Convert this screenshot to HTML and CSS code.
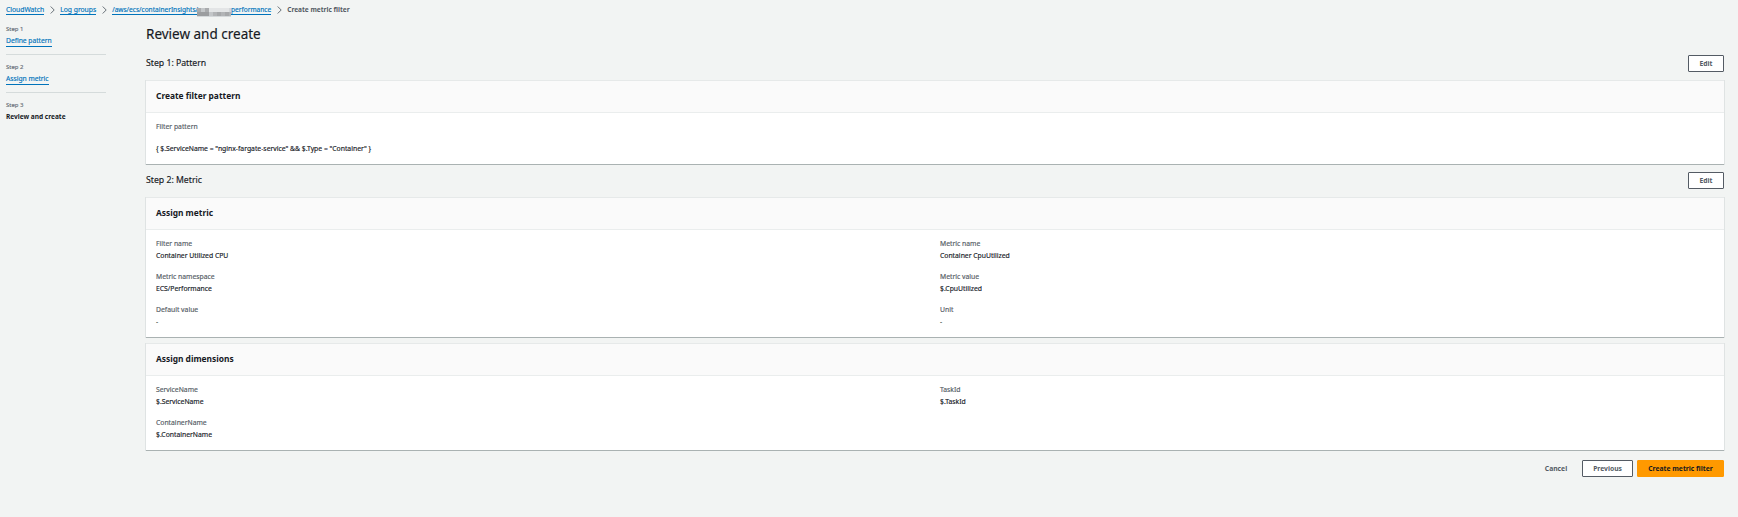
FILE: index.html
```
<!DOCTYPE html>
<html lang="en">
<head>
<meta charset="utf-8">
<title>Create metric filter</title>
<link rel="stylesheet" href="styles.css">
</head>
<body>
<nav class="breadcrumbs">
  <a class="link">CloudWatch</a>
  <svg class="chevron" viewBox="0 0 5 8"><path d="M.7.5 4.2 4 .7 7.5"/></svg>
  <a class="link">Log groups</a>
  <svg class="chevron" viewBox="0 0 5 8"><path d="M.7.5 4.2 4 .7 7.5"/></svg>
  <a class="link path"><span>/aws/ecs/containerInsights/</span><svg class="redacted" viewBox="0 0 34 9"><path fill="#d4d8da" d="M0 0h34v9H0z"/><path fill="#a9abad" d="M0 0h4v4H0zM8 0h4v4H8z"/><path fill="#9b9d9f" d="M0 4h12v4H0z"/><path fill="#c3c6c8" d="M4 0h4v4H4zM12 4h4v4h-4z"/><path fill="#e3e5e6" d="M12 0h20v4H12z"/><path fill="#b2b4b6" d="M16 4h18v4H16z"/><path fill="#a6a8aa" d="M20 4h4v4h-4zM28 4h4v4h-4z"/></svg><span>performance</span></a>
  <svg class="chevron" viewBox="0 0 5 8"><path d="M.7.5 4.2 4 .7 7.5"/></svg>
  <span class="current">Create metric filter</span>
</nav>
<div class="layout">
  <aside class="steps">
    <div class="step"><div class="step-no">Step 1</div><a class="link">Define pattern</a></div>
    <div class="step"><div class="step-no">Step 2</div><a class="link">Assign metric</a></div>
    <div class="step"><div class="step-no">Step 3</div><b class="active">Review and create</b></div>
  </aside>
  <main class="main">
    <h1 class="title">Review and create</h1>
    <div class="section-head"><h2 class="section-title">Step 1: Pattern</h2><button class="btn">Edit</button></div>
    <section class="card">
      <h3 class="card-head">Create filter pattern</h3>
      <div class="card-body">
        <div class="label">Filter pattern</div>
        <div class="value expression">{ $.ServiceName = "nginx-fargate-service" &amp;&amp; $.Type = "Container" }</div>
      </div>
    </section>
    <div class="section-head second"><h2 class="section-title">Step 2: Metric</h2><button class="btn">Edit</button></div>
    <section class="card">
      <h3 class="card-head">Assign metric</h3>
      <div class="card-body grid">
        <div><div class="label">Filter name</div><div class="value">Container Utilized CPU</div></div>
        <div><div class="label">Metric name</div><div class="value">Container CpuUtilized</div></div>
        <div><div class="label">Metric namespace</div><div class="value">ECS/Performance</div></div>
        <div><div class="label">Metric value</div><div class="value">$.CpuUtilized</div></div>
        <div><div class="label">Default value</div><div class="value">-</div></div>
        <div><div class="label">Unit</div><div class="value">-</div></div>
      </div>
    </section>
    <section class="card last">
      <h3 class="card-head">Assign dimensions</h3>
      <div class="card-body grid">
        <div><div class="label">ServiceName</div><div class="value">$.ServiceName</div></div>
        <div><div class="label">TaskId</div><div class="value">$.TaskId</div></div>
        <div><div class="label">ContainerName</div><div class="value">$.ContainerName</div></div>
      </div>
    </section>
    <div class="actions">
      <button class="btn plain">Cancel</button>
      <button class="btn">Previous</button>
      <button class="btn primary">Create metric filter</button>
    </div>
  </main>
</div>
</body>
</html>
```
FILE: styles.css
```
* { box-sizing: border-box; }
body {
  margin: 0;
  background: #f2f4f3;
  color: #16191f;
  font: 6.8px/12px "Noto Sans", sans-serif;
  -webkit-text-stroke: .15px;
}
h1, h2, h3 { margin: 0; }

.breadcrumbs {
  display: flex;
  align-items: center;
  height: 15px;
  margin: 2px 0;
  padding-left: 6px;
  line-height: 11px;
}
.breadcrumbs .link { font-size: 6.75px; height: 11px; }
.breadcrumbs .path { font-size: 6.57px; display: flex; }
.link { color: #0073bb; border-bottom: 1px solid #0073bb; white-space: nowrap; }
.chevron {
  width: 5px;
  height: 8px;
  margin: 0 5px 0 6px;
  fill: none;
  stroke: #687078;
}
.redacted { width: 34px; height: 9px; margin: 4px 0 -3px 0; }
.path span:first-child { margin-right: -1px; }
.current { color: #545b64; font-size: 6.55px; font-weight: 700; -webkit-text-stroke: 0; }

.layout { display: flex; }
.steps { width: 100px; margin: 4px 40px 0 6px; }
.step { height: 38px; }
.step + .step { border-top: 1px solid #d5dbdb; padding-top: 6px; }
.step:first-child { height: 31px; }
.step-no { font-size: 5.95px; color: #687078; line-height: 12px; }
.step .link { display: inline-block; font-size: 6.7px; line-height: 10px; height: 11px; }
.active { display: block; font-size: 6.56px; line-height: 12px; -webkit-text-stroke: 0; }

.main { width: 1578px; }
.title { font-size: 13.5px; line-height: 20px; font-weight: 400; padding-top: 5px; }
.section-head { display: flex; justify-content: space-between; align-items: center; height: 17px; margin: 11px 0 8px; }
.section-head.second { margin: 7px 0 8px; }
.section-title { font-size: 8.7px; font-weight: 400; line-height: 12px; padding-bottom: 2px; }

.card {
  background: #fff;
  border-top: 1px solid #e6e9e9;
  border-bottom: 1px solid #aab2b2;
  box-shadow: 1px 0 #dfe3e3, -1px 0 #dfe3e3;
}
.card.last { margin-top: 5px; }
.card-head {
  height: 32px;
  padding-left: 10px;
  background: #fafafa;
  border-bottom: 1px solid #eaeded;
  font-size: 8.4px;
  line-height: 30px;
  -webkit-text-stroke: 0;
}
.card-body { padding: 8px 10px 9px; }
.grid { display: grid; grid-template-columns: 1fr 1fr; gap: 9px 10px; }
.label { color: #545b64; }
.expression { margin-top: 10px; }

.actions { display: flex; justify-content: flex-end; margin-top: 9px; }
.btn {
  height: 17px;
  padding: 0 10px;
  background: #fff;
  border: 1px solid #545b64;
  border-radius: 1px;
  color: #545b64;
  font: 700 6.76px/14px "Noto Sans", sans-serif;
  white-space: nowrap;
  -webkit-text-stroke: 0;
}
.section-head .btn { width: 36px; }
.actions .btn + .btn { margin-left: 4px; }
.btn.plain { background: none; border-color: transparent; }
.btn.primary { width: 87px; background: #ff9900; border-color: #ff9900; color: #16191f; }
```
